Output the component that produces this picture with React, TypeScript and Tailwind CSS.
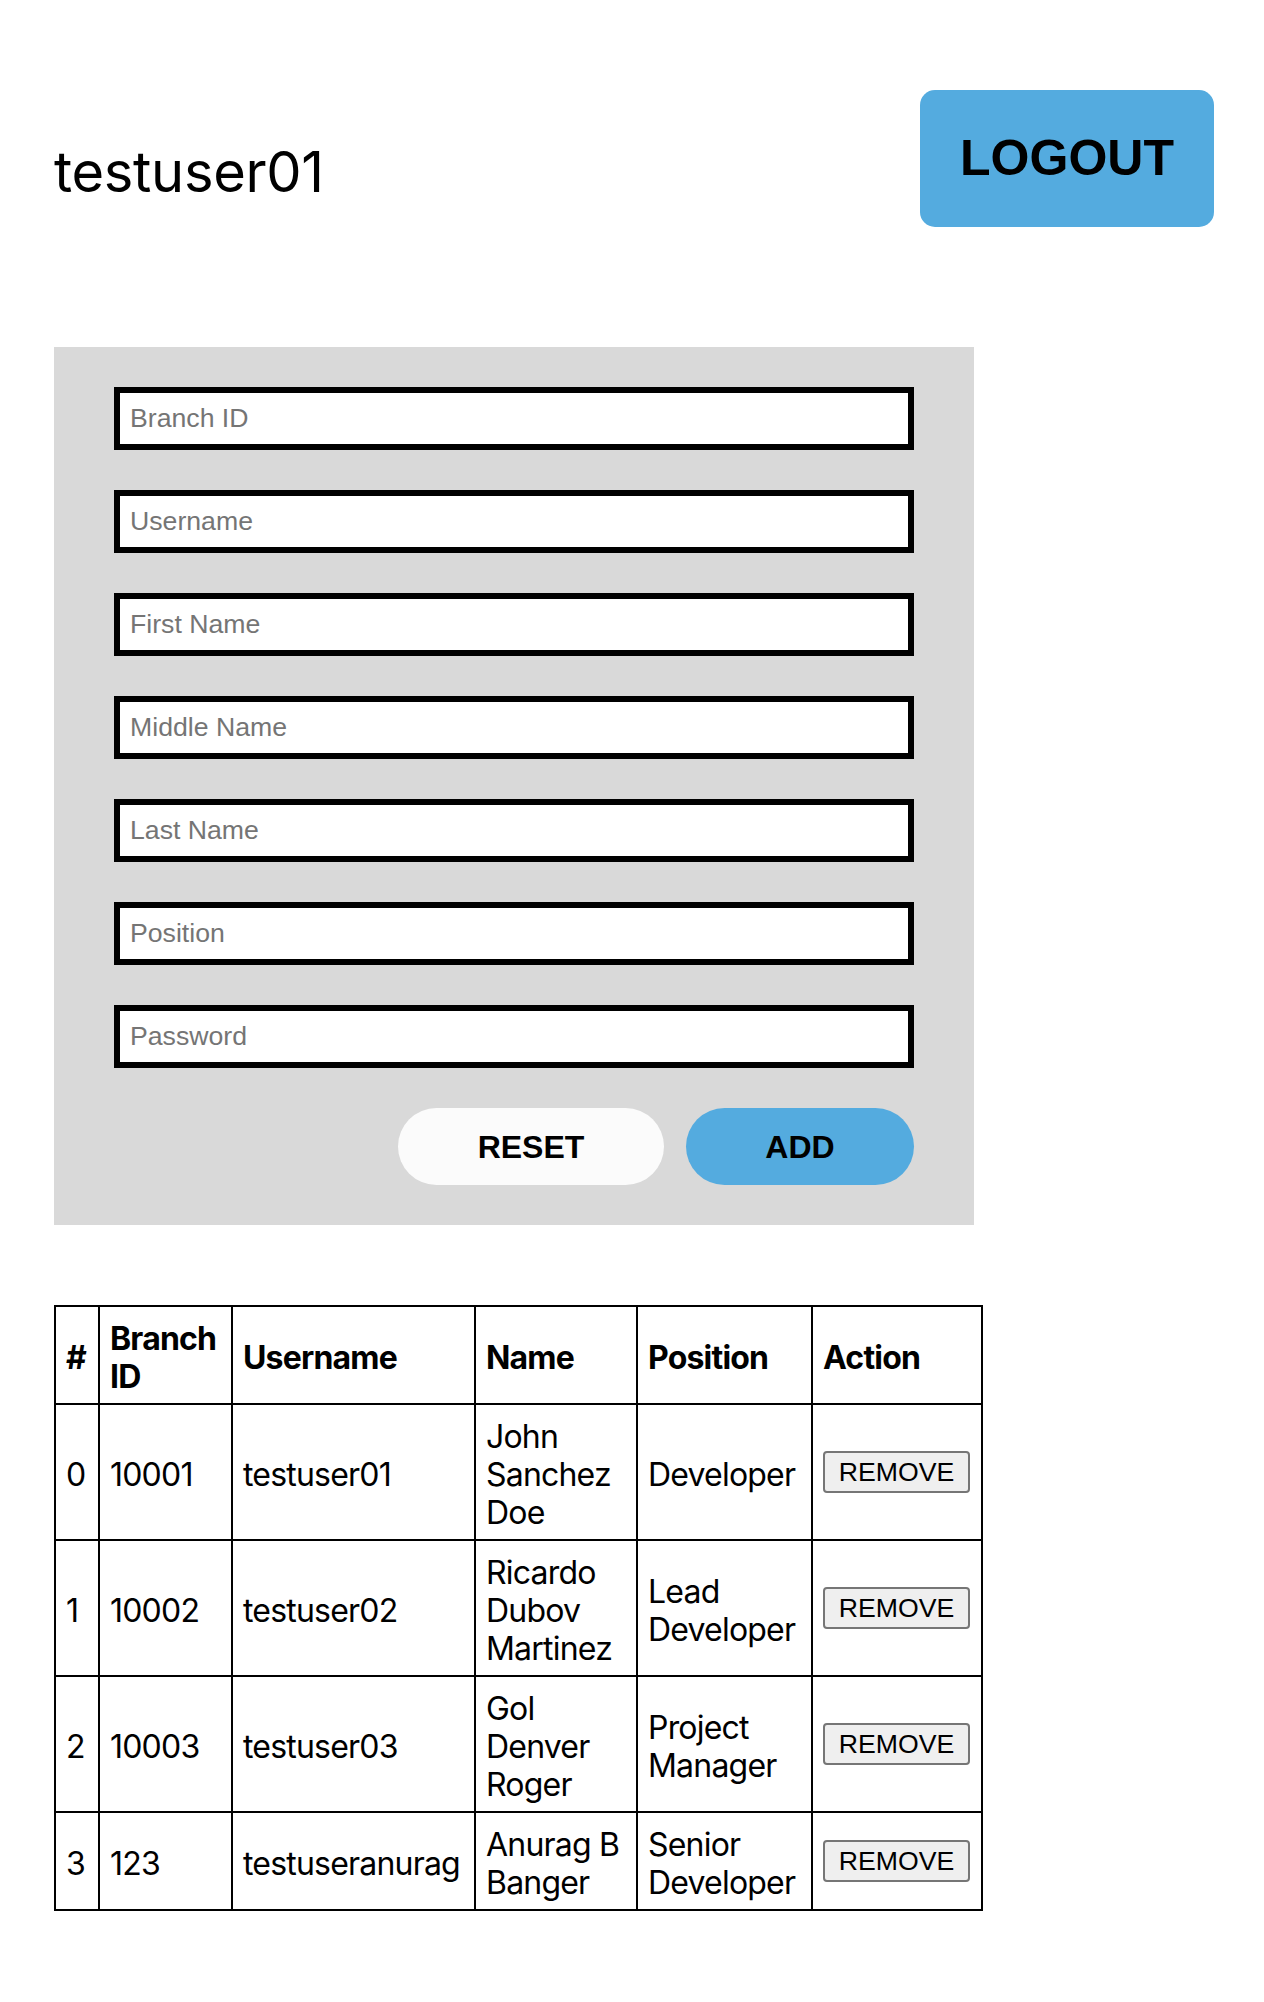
import React from "react";

type Row = {
  idx: string;
  branch: string;
  user: string;
  name: string[];
  position: string[];
};

const rows: Row[] = [
  { idx: "0", branch: "10001", user: "testuser01", name: ["John", "Sanchez", "Doe"], position: ["Developer"] },
  { idx: "1", branch: "10002", user: "testuser02", name: ["Ricardo", "Dubov", "Martinez"], position: ["Lead", "Developer"] },
  { idx: "2", branch: "10003", user: "testuser03", name: ["Gol", "Denver", "Roger"], position: ["Project", "Manager"] },
  { idx: "3", branch: "123", user: "testuseranurag", name: ["Anurag B", "Banger"], position: ["Senior", "Developer"] },
];

const fields = ["Branch ID", "Username", "First Name", "Middle Name", "Last Name", "Position", "Password"];

function Lines({ lines }: { lines: string[] }) {
  return (
    <>
      {lines.map((l, i) => (
        <React.Fragment key={i}>
          {i > 0 && <br />}
          {l}
        </React.Fragment>
      ))}
    </>
  );
}

export default function App() {
  const cell = "border-2 border-black px-[10px] pt-[13px] pb-[7px] align-middle text-left whitespace-nowrap";
  const actionCell = "border-2 border-black px-[10px] py-[10px] align-middle text-left whitespace-nowrap";
  return (
    <div className="min-h-[2002px] bg-white text-black font-['Inter','Noto_Sans',sans-serif]">
      <div className="pl-[54px] pr-[50px] pt-[90px] pb-[80px]">
        <div className="flex items-start justify-between">
          <h1 className="mt-[48px] text-[56px] leading-[68px] font-normal tracking-[-0.3px]">testuser01</h1>
          <button className="w-[294px] h-[137px] rounded-[15px] bg-[#54abdf] text-black font-bold text-[50px] font-['Liberation_Sans',Arial,sans-serif]">
            LOGOUT
          </button>
        </div>

        <div className="mt-[120px] w-[920px] bg-[#d9d9d9] px-[60px] py-[40px] flex flex-col gap-[40px]">
          {fields.map((f) => (
            <input
              key={f}
              type={f === "Password" ? "password" : "text"}
              placeholder={f}
              className="block w-[800px] h-[63px] border-[6px] border-black bg-white px-[10px] text-[26.67px] text-black placeholder:text-[#757575] font-['Liberation_Sans',Arial,sans-serif] outline-none"
            />
          ))}
          <div className="flex justify-end gap-[22px]">
            <button className="w-[266px] h-[77px] rounded-full bg-[#fbfbfb] text-black font-bold text-[32px] font-['Liberation_Sans',Arial,sans-serif]">
              RESET
            </button>
            <button className="w-[228px] h-[77px] rounded-full bg-[#54abdf] text-black font-bold text-[32px] font-['Liberation_Sans',Arial,sans-serif]">
              ADD
            </button>
          </div>
        </div>

        <table className="mt-[80px] border-collapse table-fixed w-[927px] border-2 border-black text-[32px] leading-[38px] tracking-[-0.8px]">
          <colgroup>
            <col className="w-[44px]" />
            <col className="w-[133px]" />
            <col className="w-[243px]" />
            <col className="w-[162px]" />
            <col className="w-[175px]" />
            <col className="w-[170px]" />
          </colgroup>
          <thead>
            <tr className="font-bold">
              <th className={cell}>#</th>
              <th className={cell}>
                Branch
                <br />
                ID
              </th>
              <th className={cell}>Username</th>
              <th className={cell}>Name</th>
              <th className={cell}>Position</th>
              <th className={cell}>Action</th>
            </tr>
          </thead>
          <tbody>
            {rows.map((r) => (
              <tr key={r.idx}>
                <td className={cell}>{r.idx}</td>
                <td className={cell}>{r.branch}</td>
                <td className={cell}>{r.user}</td>
                <td className={cell}>
                  <Lines lines={r.name} />
                </td>
                <td className={cell}>
                  <Lines lines={r.position} />
                </td>
                <td className={actionCell}>
                  <button className="block w-[147px] h-[42px] border-2 border-[#767676] rounded-[4px] bg-[#efefef] text-[26.67px] leading-[30px] tracking-normal text-black font-['Liberation_Sans',Arial,sans-serif]">
                    REMOVE
                  </button>
                </td>
              </tr>
            ))}
          </tbody>
        </table>
      </div>
    </div>
  );
}
